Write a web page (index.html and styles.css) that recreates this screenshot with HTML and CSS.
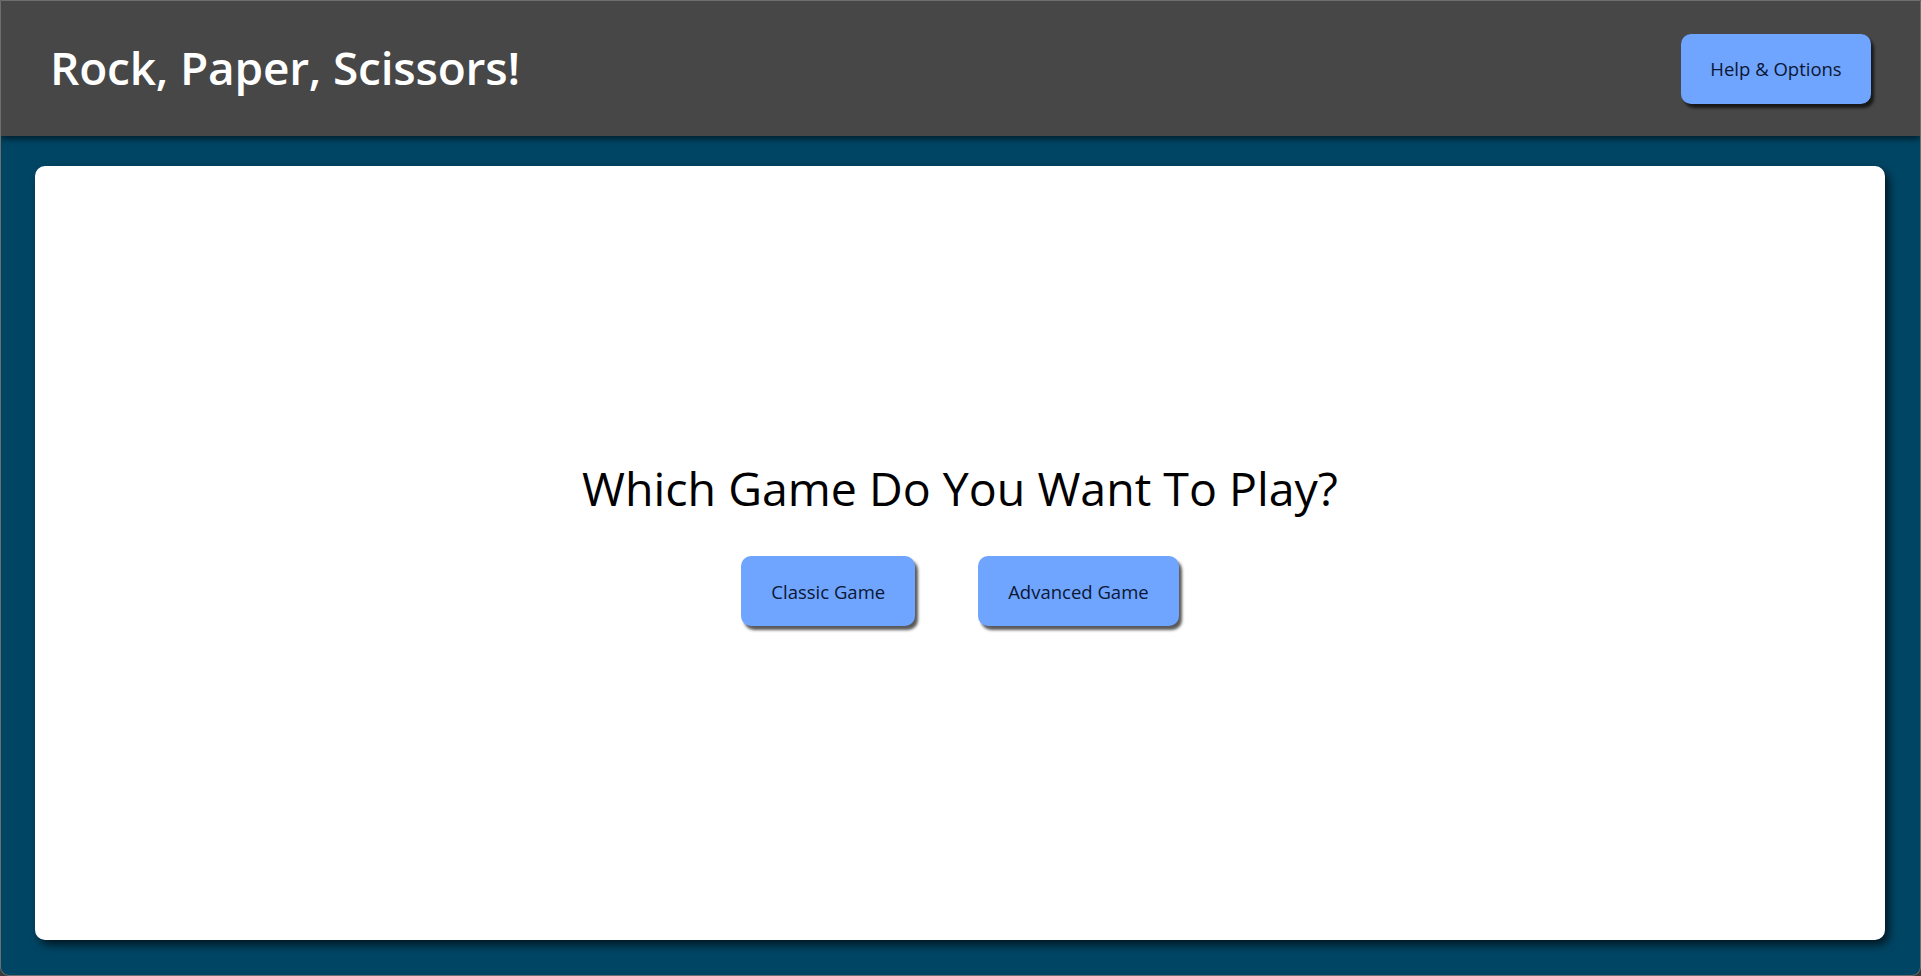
FILE: index.html
```html
<!DOCTYPE html>
<html lang="en">
<head>
<meta charset="utf-8">
<title>Rock, Paper, Scissors!</title>
<link rel="stylesheet" href="styles.css">
</head>
<body>
<div class="app">
  <header class="topbar">
    <h1 class="title">Rock, Paper, Scissors!</h1>
    <button class="btn btn-help">Help &amp; Options</button>
  </header>
  <main class="stage">
    <section class="card">
      <h2 class="question">Which Game Do You Want To Play?</h2>
      <div class="choices">
        <button class="btn btn-choice">Classic Game</button>
        <button class="btn btn-choice">Advanced Game</button>
      </div>
    </section>
  </main>
</div>
</body>
</html>
```

FILE: styles.css
```css
html, body {
  margin: 0;
  padding: 0;
  height: 100%;
  background: #3a3a3a;
}

body {
  font-family: "Open Sans", "Noto Sans", sans-serif;
}

.app {
  box-sizing: border-box;
  height: 976px;
  display: flex;
  flex-direction: column;
  background: #004564;
  border: 1px solid #6e6e6e;
  border-radius: 0 0 9px 9px;
  overflow: hidden;
}

.topbar {
  box-sizing: border-box;
  height: 135px;
  flex: 0 0 auto;
  display: flex;
  align-items: center;
  justify-content: space-between;
  padding: 0 50px 0 49px;
  background: #474747;
  box-shadow: 0 3px 6px rgba(0, 0, 0, 0.55);
  position: relative;
  z-index: 1;
}

.title {
  margin: 0 0 4px;
  color: #ffffff;
  font-size: 46px;
  font-weight: 600;
  letter-spacing: -0.2px;
}

.btn {
  font-family: "Open Sans", "Noto Sans", sans-serif;
  font-size: 18.5px;
  font-weight: 400;
  color: #0b1733;
  background: #6fa4ff;
  border: none;
  border-radius: 10px;
  box-shadow: 3px 4px 3px rgba(0, 0, 0, 0.65);
  cursor: pointer;
  height: 70px;
  padding: 0 30px;
}

.btn-help {
  width: 190px;
  padding: 0;
  margin-right: -1px;
}

.stage {
  flex: 1 1 auto;
  display: flex;
  padding: 30px 35px 35px 34px;
  box-sizing: border-box;
}

.card {
  flex: 1 1 auto;
  background: #ffffff;
  border-radius: 10px;
  box-shadow: 4px 5px 8px rgba(0, 0, 0, 0.65);
  display: flex;
  flex-direction: column;
  align-items: center;
  justify-content: center;
}

.question {
  margin: 0 0 36px;
  font-size: 46.5px;
  font-weight: 400;
  color: #000000;
  letter-spacing: 0;
}

.choices {
  display: flex;
  gap: 63px;
  margin-bottom: 24px;
}

.btn-choice {
  padding: 0 30px;
}
```
